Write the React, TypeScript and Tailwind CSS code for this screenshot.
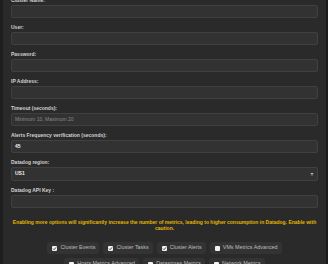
import React from "react";

type Field = {
  label: string;
  value?: string;
  placeholder?: string;
  select?: boolean;
};

const fields: Field[] = [
  { label: "Cluster Name:" },
  { label: "User:" },
  { label: "Password:" },
  { label: "IP Address:" },
  { label: "Timeout (seconds):", placeholder: "Minimum 10, Maximum 20" },
  { label: "Alerts Frequency verification (seconds):", value: "45" },
  { label: "Datadog region:", value: "US1", select: true },
  { label: "Datadog API Key :" },
];

const options = [
  { name: "Cluster Events", checked: true },
  { name: "Cluster Tasks", checked: true },
  { name: "Cluster Alerts", checked: true },
  { name: "VMs Metrics Advanced", checked: false },
];

const moreOptions = ["Hosts Metrics Advanced", "Datastores Metrics", "Network Metrics"];

const Box: React.FC<{ checked: boolean }> = ({ checked }) => (
  <span className="flex h-[5px] w-[5px] shrink-0 items-center justify-center rounded-[1px] bg-[#f2f2f2]">
    {checked && (
      <svg viewBox="0 0 10 10" className="h-[5px] w-[5px]">
        <path d="M2 5.2 L4.2 7.4 L8 2.8" fill="none" stroke="#333" strokeWidth="1.8" />
      </svg>
    )}
  </span>
);

const Pill: React.FC<{ name: string; checked: boolean }> = ({ name, checked }) => (
  <div className="flex h-[12px] items-center gap-[3px] rounded-[3px] bg-[#333333] pl-[5px] pr-[4px]">
    <Box checked={checked} />
    <span className="text-[5.4px] leading-none text-[#bdbdbd]">{name}</span>
  </div>
);

export default function App() {
  return (
    <div className="flex h-[264px] w-[328px] overflow-hidden bg-[#2a2a2a] font-['Liberation_Sans',Arial,sans-serif]">
      <div className="w-[3px] shrink-0 bg-[#1e1e1e]" />
      <div className="flex min-w-0 flex-1 flex-col pl-[8px] pr-[8px]">
        <div className="mt-[-3px] flex flex-col gap-[6px]">
          {fields.map((f) => (
            <div key={f.label} className="flex flex-col gap-[2px]">
              <label className="h-[6px] text-[5px] font-bold leading-[6px] text-[#d2d2d2]">
                {f.label}
              </label>
              <div
                className={`flex items-center justify-between rounded-[2px] border border-[#404040] bg-[#323232] px-[3px] ${
                  f.select ? "h-[14px]" : "h-[13px]"
                }`}
              >
                {f.value ? (
                  <span className="text-[5px] font-bold text-[#f0f0f0]">{f.value}</span>
                ) : (
                  <span className="text-[5px] text-[#8a8a8a]">{f.placeholder}</span>
                )}
                {f.select && (
                  <svg viewBox="0 0 6 5" className="h-[3px] w-[4px]">
                    <path d="M0 0 H6 L3 3 Z" fill="#bbb" />
                    <path d="M1 3.5 H5" stroke="#bbb" strokeWidth="0.8" />
                  </svg>
                )}
              </div>
            </div>
          ))}
        </div>
        <p className="mt-[12px] text-center text-[5px] font-bold leading-[5.5px] text-[#e3b600]">
          Enabling more options will significantly increase the number of metrics, leading to higher
          consumption in Datadog. Enable with caution.
        </p>
        <div className="mt-[11px] flex flex-wrap justify-center gap-x-[4px] gap-y-[4px]">
          {options.map((o) => (
            <Pill key={o.name} name={o.name} checked={o.checked} />
          ))}
          {moreOptions.map((o) => (
            <Pill key={o} name={o} checked={false} />
          ))}
        </div>
      </div>
      <div className="w-[2px] shrink-0 bg-[#1b1b1b]" />
    </div>
  );
}
